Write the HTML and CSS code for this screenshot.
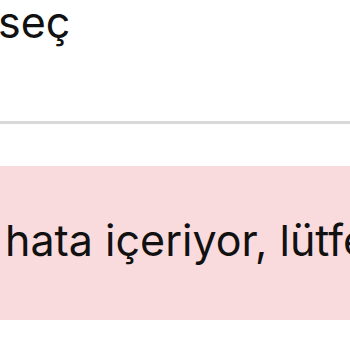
FILE: index.html
```html
<!DOCTYPE html>
<html lang="tr">
<head>
<meta charset="utf-8">
<link rel="stylesheet" href="styles.css">
</head>
<body>
<div class="page">
  <div class="title">seç</div>
  <div class="divider"></div>
  <div class="alert"><span class="alert-text">hata içeriyor, lütfen tekrar deneyin</span></div>
</div>
</body>
</html>
```

FILE: styles.css
```css
html, body {
  margin: 0;
  padding: 0;
  background: #ffffff;
  overflow: hidden;
}
.page {
  width: 350px;
  height: 350px;
  display: flex;
  flex-direction: column;
  font-family: Inter, "Noto Sans", "Liberation Sans", sans-serif;
  color: #111111;
  overflow: hidden;
}
.title {
  font-size: 43px;
  line-height: 52px;
  margin-top: -4px;
  margin-left: -2px;
  white-space: nowrap;
}
.divider {
  flex: none;
  height: 3px;
  background: #d9d9d9;
  margin-top: 73px;
}
.alert {
  flex: none;
  margin-top: 42px;
  height: 154px;
  box-sizing: border-box;
  padding-bottom: 7px;
  background: #fadbdd;
  display: flex;
  align-items: center;
  padding-left: 5px;
  white-space: nowrap;
  overflow: hidden;
}
.alert-text {
  font-size: 43px;
  line-height: 52px;
}
```
